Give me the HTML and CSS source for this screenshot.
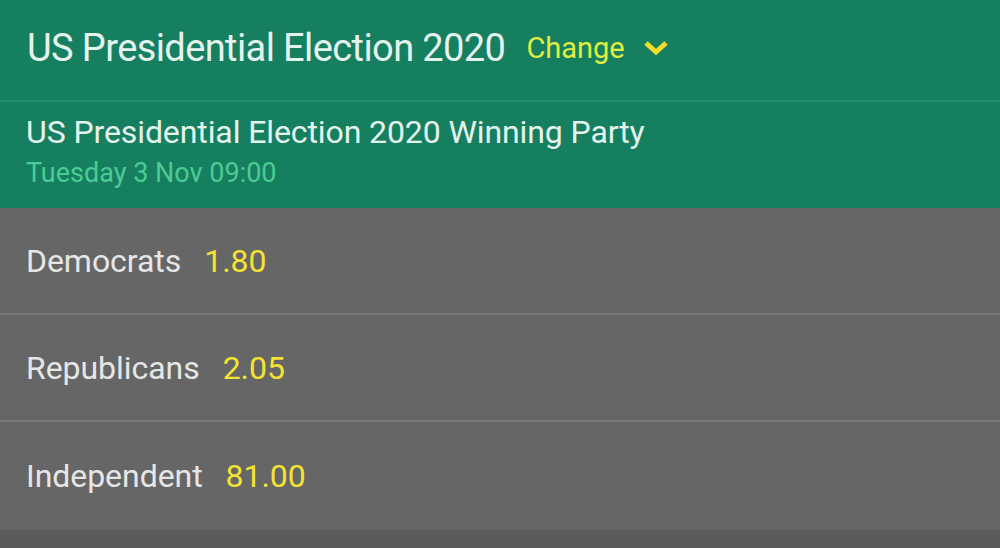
FILE: index.html
```html
<!DOCTYPE html>
<html>
<head>
<meta charset="utf-8">
<link rel="stylesheet" href="styles.css">
</head>
<body>
<div class="page">
  <header class="top">
    <h1 class="title">US Presidential Election 2020</h1>
    <button class="change">Change
      <svg class="chev" width="26" height="16" viewBox="0 0 26 16"><path d="M3 3 L13 12 L23 3" fill="none" stroke="#f2dc2a" stroke-width="5" stroke-linecap="butt" stroke-linejoin="miter"/></svg>
    </button>
  </header>
  <section class="market">
    <div class="market-name">US Presidential Election 2020 Winning Party</div>
    <div class="market-date">Tuesday 3 Nov 09:00</div>
  </section>
  <ul class="rows">
    <li class="row"><span class="name">Democrats</span><span class="odds">1.80</span></li>
    <li class="row"><span class="name">Republicans</span><span class="odds">2.05</span></li>
    <li class="row"><span class="name">Independent</span><span class="odds">81.00</span></li>
  </ul>
  <div class="foot"></div>
</div>
</body>
</html>
```
FILE: styles.css
```css
* { box-sizing: border-box; }
html, body { margin: 0; padding: 0; }
body { width: 1000px; height: 548px; overflow: hidden; background: #5b5b5b; font-family: Roboto, "Noto Sans", sans-serif; }
.page { display: flex; flex-direction: column; }
.top { height: 102px; background: #167f5f; display: flex; align-items: center; padding: 0 27px 4px; gap: 21px; border-bottom: 2px solid #24906e; }
.title { margin: 0; font-weight: 400; font-size: 38px; letter-spacing: -0.6px; color: #e4f3ee; }
.change { background: none; border: 0; padding: 0; display: flex; align-items: center; gap: 18px; font-family: inherit; font-size: 29px; color: #e2ee3f; }
.market { height: 106px; background: #167f5f; padding: 10px 26px 0; }
.market-name { font-size: 32px; letter-spacing: -0.1px; color: #e4f3ee; line-height: 40px; }
.market-date { font-size: 27px; color: #4ccb95; line-height: 42px; }
.rows { list-style: none; margin: 0; padding: 0; background: #666; }
.row { height: 107px; display: flex; align-items: center; gap: 23px; padding: 0 26px; font-size: 32px; letter-spacing: -0.05px; border-bottom: 2px solid #7a7a7a; }
.row:last-child { border-bottom: 0; height: 108px; }
.name { color: #e6e6e6; }
.odds { color: #f5e331; }
.foot { height: 18px; background: #5b5b5b; }
```
